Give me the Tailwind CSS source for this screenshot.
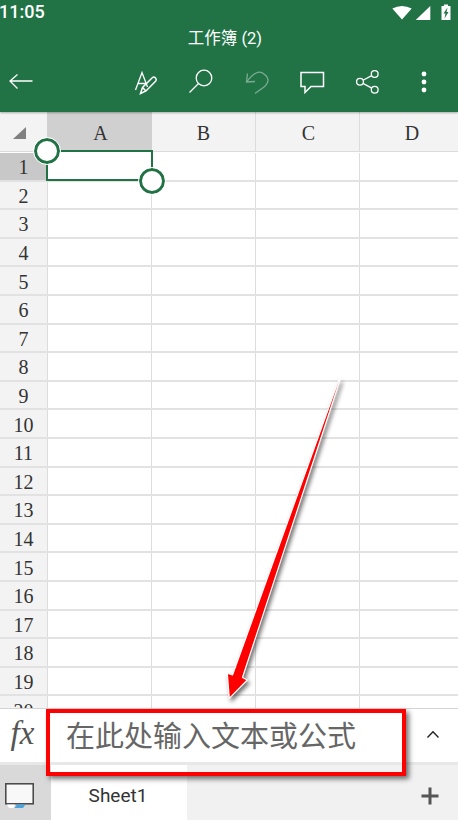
<!DOCTYPE html>
<html lang="en">
<head>
    <meta charset="UTF-8">
    <meta name="viewport" content="width=device-width, initial-scale=1.0">
    <title>工作簿 (2)</title>
    <script src="https://cdn.jsdelivr.net/npm/@tailwindcss/browser@4"></script>
</head>
<body class="relative flex flex-col w-[458px] h-[820px] overflow-hidden bg-white font-['Roboto','Noto_Sans_CJK_SC',sans-serif]">

  <!-- green app bar -->
  <header class="relative z-10 h-[112px] shrink-0 bg-[#217346] text-white shadow-[0_1px_2px_rgba(0,0,0,0.3)]">
    <div class="flex items-center justify-between h-[23px]">
      <span class="text-[18px] font-medium leading-none mt-[1px] -ml-[1px]">11:05</span>
      <svg width="66" height="20" viewBox="392 0 66 20">
        <path d="M392.3 6.5 Q402 1.5 411.7 6.5 L402 17.5 Z" fill="#fff"/>
        <path d="M415.7 18 L430.3 4 V18 Z" fill="#fff"/>
        <path d="M441.5 4 H444 V2.5 H448 V4 H450.5 V18 H441.5 Z" fill="#fff"/>
        <path d="M447.5 5.5 L443.5 11.5 H445.5 L444.5 16.5 L448.5 10 H446.5 Z" fill="#217346"/>
      </svg>
    </div>
    <div class="h-[27px] flex items-center justify-center text-[16.5px] leading-none pt-[5px] pr-[8px]">工作簿 (2)</div>
    <svg width="458" height="62" viewBox="0 50 458 62" fill="none" stroke="#fff" stroke-width="1.3" class="block">
      <!-- back -->
      <path d="M32.5 81 H10 M17.5 74.5 L10 81 L17.5 88.5"/>
      <!-- edit / font -->
      <path d="M135.5 90 L142 72.5 L147.5 87 M138 83.5 H145.5"/>
      <path d="M140.5 93.5 L142.5 87.5 L152.5 77.5 Q154 76.5 155.5 78 Q157 79.5 155.8 81 L146 91 Z M142.5 87.5 L146 91" stroke-width="1.5"/>
      <!-- search -->
      <circle cx="204" cy="78" r="7.8"/>
      <path d="M198.5 83.5 L189.5 92.5"/>
      <!-- undo, disabled -->
      <g opacity="0.4">
        <path d="M246.5 82 Q257 68 264 74 Q272 80 264 87 L255 93.5"/>
        <path d="M247.5 73.5 L246.5 82 L255 81.5"/>
      </g>
      <!-- comment -->
      <path d="M301 72.5 H323.5 V86.5 H311 L305 92.5 V86.5 H301 Z" stroke-width="1.5"/>
      <!-- share -->
      <circle cx="360" cy="81.8" r="3.4"/>
      <circle cx="374.7" cy="74" r="3.4"/>
      <circle cx="374.7" cy="89.7" r="3.4"/>
      <path d="M363 80.2 L371.7 75.6 M363 83.4 L371.7 88.1"/>
      <!-- more -->
      <g fill="#fff" stroke="none">
        <circle cx="424" cy="74" r="2.4"/>
        <circle cx="424" cy="82" r="2.4"/>
        <circle cx="424" cy="90" r="2.4"/>
      </g>
    </svg>
  </header>

  <!-- sheet -->
  <main class="relative flex-1 min-h-0 overflow-hidden font-['Liberation_Serif',serif] text-[20px] text-[#333]">
    <div class="flex h-[40px] bg-[#f3f3f3] border-b border-[#dcdcdc]">
      <div class="w-[47px] shrink-0">
        <svg width="47" height="39"><path d="M13 27 H26 V15 Z" fill="#808080"/></svg>
      </div>
      <div class="w-[105px] shrink-0 flex items-center justify-center bg-[#d0d0d0] pt-[2px] pl-[2px]">A</div>
      <div class="w-[104px] shrink-0 flex items-center justify-center border-r border-[#dcdcdc] pt-[2px]">B</div>
      <div class="w-[104px] shrink-0 flex items-center justify-center border-r border-[#dcdcdc] pt-[2px] pl-[2px]">C</div>
      <div class="w-[104px] shrink-0 flex items-center justify-center pt-[2px]">D</div>
    </div>
    <div id="rows" class="mt-[1px]"></div>

    <!-- selection on A1 -->
    <div class="absolute left-[46px] top-[38px] w-[107px] h-[31px] border-2 border-[#217346]"></div>
    <div class="absolute left-[34px] top-[26px] w-[26px] h-[26px] rounded-full bg-white border-[3px] border-[#217346] outline outline-1 outline-white"></div>
    <div class="absolute left-[139px] top-[56px] w-[26px] h-[26px] rounded-full bg-white border-[3px] border-[#217346] outline outline-1 outline-white"></div>
  </main>

  <!-- formula bar -->
  <div class="relative h-[57px] shrink-0 flex items-center bg-white border-t border-[#d4d4d4] border-b-[3px] border-b-[#e8e8e8]">
    <span class="w-[45px] text-center font-['Liberation_Serif',serif] italic text-[33px] leading-none text-[#555] -mt-[4px]">fx</span>
    <span class="ml-[21px] text-[29px] leading-none text-[#666] font-['Noto_Sans_CJK_SC',sans-serif] whitespace-nowrap -mt-[2px]">在此处输入文本或公式</span>
    <svg width="14" height="9" viewBox="0 0 14 9" fill="none" stroke="#222" stroke-width="1.4" class="absolute left-[426px] top-[21px]"><path d="M1.5 7.5 L7 1.8 L12.5 7.5"/></svg>
  </div>

  <!-- sheet tabs -->
  <footer class="h-[55px] shrink-0 flex bg-[#f1f1f1]">
    <div class="w-[51px] flex items-start justify-start bg-[#d9d9d9] pl-[5px] pt-[18px]">
      <svg width="30" height="26" viewBox="0 0 30 26">
        <rect x="0.8" y="0.8" width="27.4" height="20" fill="#f8f8f8" stroke="#444" stroke-width="1.5"/>
        <path d="M2 21.5 H10 L8.5 25 H4 Z" fill="#fff"/>
        <path d="M12 21.5 H20.5 L18 25 H9.5 Z" fill="#4aa3df"/>
      </svg>
    </div>
    <div class="w-[136px] flex items-center justify-center bg-white text-[19px] text-[#333] pt-[7px] pr-[2px]">Sheet1</div>
    <div class="flex-1 relative">
      <svg width="18" height="18" viewBox="0 0 18 18" stroke="#555" stroke-width="3" class="absolute right-[19px] top-[22px]"><path d="M0.5 9 H17.5 M9 0.5 V17.5"/></svg>
    </div>
  </footer>

  <!-- annotation: red box and arrow -->
  <div class="absolute left-[46px] top-[709px] w-[360px] h-[67px] border-[4px] border-[#ff0000] shadow-[3px_3px_5px_rgba(0,0,0,0.55)]"></div>
  <svg width="458" height="820" viewBox="0 0 458 820" class="absolute left-0 top-0 pointer-events-none drop-shadow-[2px_3px_2px_rgba(0,0,0,0.55)]">
    <path d="M339 379.3 L340 380 L242.5 677.5 L247.3 680 L229.3 698.3 L227.3 673.3 L232.5 675 Z" fill="#ff0000" stroke="#fff" stroke-width="1.2" stroke-linejoin="round"/>
  </svg>

  <script>
    // 20 numbered rows, the last one is cut off by the formula bar
    const rows = document.getElementById('rows');
    for (let i = 1; i <= 20; i++) {
      const row = document.createElement('div');
      row.className = 'flex h-[28.6px] border-b-2 border-[#e2e2e2]';
      const head = i === 1 ? 'bg-[#c8c8c8]' : 'bg-[#f3f3f3]';
      row.innerHTML =
        '<div class="w-[48px] shrink-0 flex items-center justify-center border-r border-[#dcdcdc] leading-none pt-[2px] ' + head + '">' + i + '</div>' +
        '<div class="w-[104px] shrink-0 border-r border-[#dcdcdc]"></div>' +
        '<div class="w-[104px] shrink-0 border-r border-[#dcdcdc]"></div>' +
        '<div class="w-[104px] shrink-0 border-r border-[#dcdcdc]"></div>' +
        '<div class="flex-1"></div>';
      rows.appendChild(row);
    }
  </script>
</body>
</html>
